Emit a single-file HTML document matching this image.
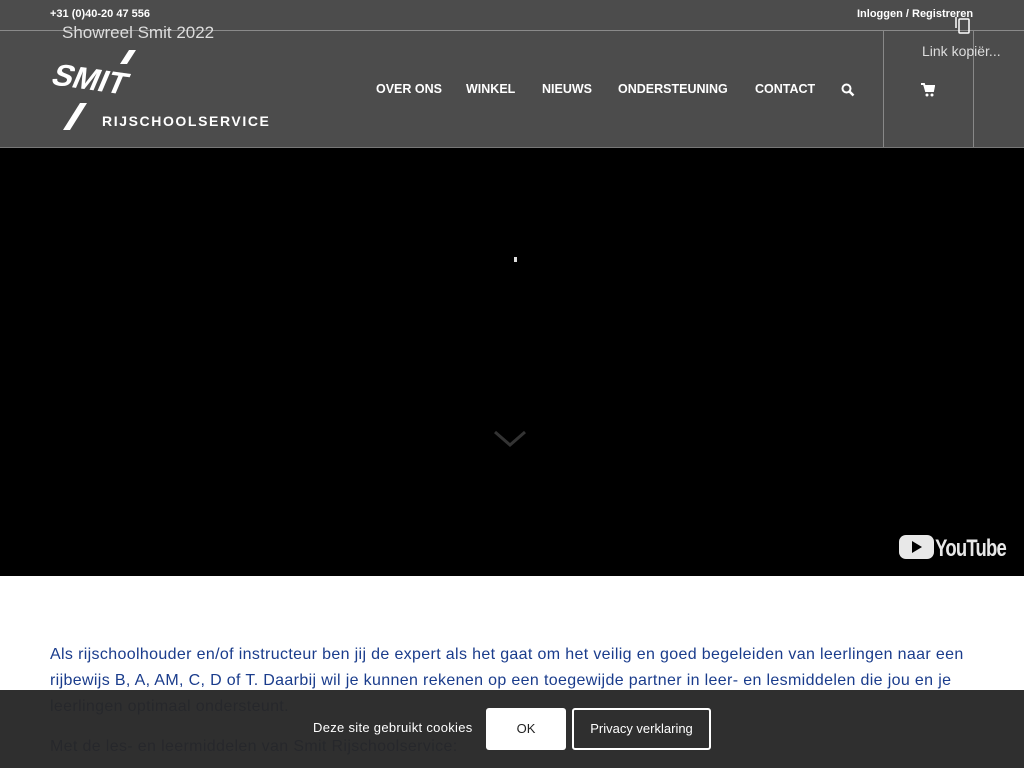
<!DOCTYPE html>
<html><head><meta charset="utf-8"><style>
body{margin:0;width:1024px;height:768px;overflow:hidden;font-family:"Liberation Sans",sans-serif;background:#fff;position:relative}
.hdr{position:absolute;left:0;top:0;width:1024px;height:147px;background:#4c4c4c;border-bottom:1px solid #777}
.top{position:absolute;left:0;top:30px;width:1024px;height:1px;background:#8a8a8a}
.w{color:#fff;position:absolute;white-space:nowrap}
.nav{font-weight:bold;font-size:12.5px;top:82px}
.vl{position:absolute;top:31px;width:1px;height:116px;background:#888}
.vid{position:absolute;left:0;top:148px;width:1024px;height:428px;background:#000}
.txt{position:absolute;left:50px;top:642px;width:935px;color:#1a3c8c;font-size:16px;line-height:26px;letter-spacing:0.35px}
.ck{position:absolute;left:0;top:690px;width:1024px;height:78px;background:rgba(38,38,38,0.96)}
</style></head><body>
<div class="hdr"></div><div class="top"></div>
<div class="w" style="left:50px;top:8px;font-size:11px;font-weight:bold">+31 (0)40-20 47 556</div>
<div class="w" style="left:857px;top:8px;font-size:11px;font-weight:bold">Inloggen / Registreren</div>
<div class="w" style="left:62px;top:23px;font-size:17px;color:#ddd">Showreel Smit 2022</div>
<svg style="position:absolute;left:52px;top:48px" width="230" height="84">
<polygon points="77,2 84,2 75,16 68,16" fill="#fff"/>
<polygon points="28,55 35,55 18,82 11,82" fill="#fff"/>
<text x="10" y="42" font-family="Liberation Sans" font-weight="bold" font-size="31" fill="#fff" transform="rotate(8 40 30) skewX(-15)">SMIT</text>
<text x="50" y="78" font-family="Liberation Sans" font-weight="bold" font-size="14" fill="#fff" letter-spacing="1.6">RIJSCHOOLSERVICE</text>
</svg>
<div class="w nav" style="left:376px">OVER ONS</div>
<div class="w nav" style="left:466px">WINKEL</div>
<div class="w nav" style="left:542px">NIEUWS</div>
<div class="w nav" style="left:618px">ONDERSTEUNING</div>
<div class="w nav" style="left:755px">CONTACT</div>
<svg style="position:absolute;left:841px;top:83px" width="14" height="14"><circle cx="5.5" cy="5.5" r="4" stroke="#fff" stroke-width="2" fill="none"/><line x1="8.5" y1="8.5" x2="12.5" y2="12.5" stroke="#fff" stroke-width="2.5"/></svg>
<div class="vl" style="left:883px"></div><div class="vl" style="left:973px"></div>
<svg style="position:absolute;left:921px;top:83px" width="14" height="14"><path d="M0 1h3l2 7h7l1-5H4" stroke="#fff" stroke-width="2" fill="#fff"/><circle cx="6" cy="12" r="1.5" fill="#fff"/><circle cx="11" cy="12" r="1.5" fill="#fff"/></svg>
<div class="vid"></div>
<svg style="position:absolute;left:955px;top:16px" width="16" height="18"><rect x="4" y="3" width="10" height="14" rx="1" stroke="#fff" stroke-width="1.5" fill="none"/><line x1="1" y1="1" x2="1" y2="12" stroke="#fff" stroke-width="1.5"/></svg>
<div class="w" style="left:922px;top:43px;font-size:14px;color:#ddd">Link kopiër...</div>
<div style="position:absolute;left:514px;top:257px;width:3px;height:5px;background:#ddd"></div>
<svg style="position:absolute;left:493px;top:430px" width="34" height="18"><path d="M2 2l15 13 15-13" stroke="#333" stroke-width="3" fill="none"/></svg>
<svg style="position:absolute;left:899px;top:534px" width="110" height="26"><rect x="0" y="1" width="35" height="24" rx="7" fill="#e8e8e8"/><polygon points="13,7 13,19 23,13" fill="#000"/><text x="47" y="22" font-family="Liberation Sans" font-size="24" font-weight="bold" fill="#e8e8e8" transform="scale(0.77,1)" style="letter-spacing:-1px">YouTube</text></svg>
<div class="txt">Als rijschoolhouder en/of instructeur ben jij de expert als het gaat om het veilig en goed begeleiden van leerlingen naar een rijbewijs B, A, AM, C, D of T. Daarbij wil je kunnen rekenen op een toegewijde partner in leer- en lesmiddelen die jou en je leerlingen optimaal ondersteunt.<div style="margin-top:14px">Met de les- en leermiddelen van Smit Rijschoolservice:</div></div>
<div class="ck"></div>
<div class="w" style="left:313px;top:720px;font-size:13px;letter-spacing:0.3px">Deze site gebruikt cookies</div>
<div style="position:absolute;left:486px;top:708px;width:80px;height:42px;background:#fff;border-radius:3px;font-size:13px;line-height:42px;text-align:center;color:#222">OK</div>
<div class="w" style="left:572px;top:708px;width:135px;height:38px;border:2px solid #fff;border-radius:3px;font-size:13px;line-height:38px;text-align:center">Privacy verklaring</div>
</body></html>
